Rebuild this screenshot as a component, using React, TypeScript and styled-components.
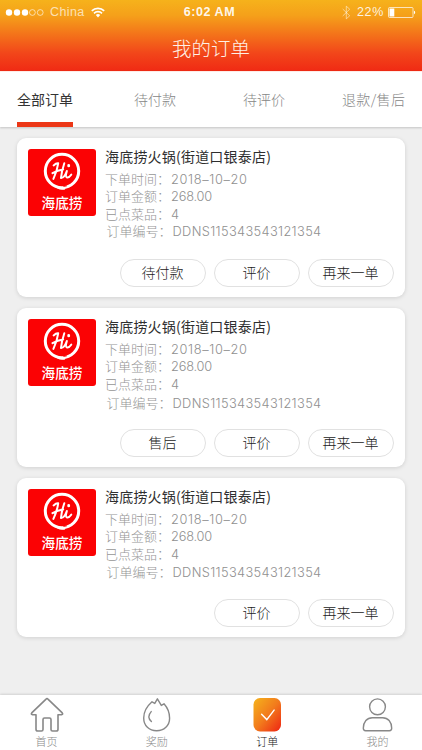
import React from "react";
import styled, { createGlobalStyle } from "styled-components";

const GlobalStyle = createGlobalStyle`
  * { box-sizing: border-box; }
  body {
    margin: 0;
    background: #efefef;
    font-family: "Noto Sans CJK SC", sans-serif;
    font-weight: 300;
  }
`;

const Screen = styled.div`
  width: 422px;
  height: 750px;
  display: flex;
  flex-direction: column;
  overflow: hidden;
  background: #efefef;
`;

const Header = styled.header`
  height: 71px;
  flex: none;
  background: linear-gradient(#f6b21b 0%, #f5a01a 22%, #f2461a 75%, #f02a14 100%);
  color: #fff;
`;

const StatusBar = styled.div`
  height: 24px;
  display: grid;
  grid-template-columns: 1fr auto 1fr;
  align-items: center;
  padding: 0 6px 0 5px;
  font-family: "Liberation Sans", sans-serif;
  font-weight: 400;
`;

const StatusGroup = styled.div<{ $end?: boolean }>`
  display: flex;
  align-items: center;
  justify-content: ${(p) => (p.$end ? "flex-end" : "flex-start")};
`;

const Carrier = styled.span`
  margin: 0 6px 0 5px;
  font-size: 12.5px;
  line-height: 24px;
  letter-spacing: 0.4px;
  color: rgba(255, 255, 255, 0.68);
`;

const Clock = styled.span`
  margin-right: 2px;
  font-size: 12.5px;
  font-weight: 700;
  line-height: 24px;
  letter-spacing: 0.55px;
  color: rgba(255, 255, 255, 0.93);
`;

const Percent = styled.span`
  margin: 0 4px 0 6px;
  font-size: 12.5px;
  letter-spacing: 0.7px;
  line-height: 24px;
  color: rgba(255, 255, 255, 0.88);
`;

const Title = styled.h1`
  margin: 0;
  height: 47px;
  font-size: 19.5px;
  line-height: 47px;
  font-weight: 300;
  text-align: center;
  color: #fff1e6;
`;

const Tabs = styled.nav`
  height: 56px;
  flex: none;
  display: flex;
  padding: 1px 0 0 17px;
  background: #fff;
  border-top: 1px solid #ffece7;
  box-shadow: 0 1px 2px rgba(0, 0, 0, 0.18);
`;

const Tab = styled.div<{ $active?: boolean; $gap: number }>`
  margin-right: ${(p) => p.$gap}px;
  height: 54px;
  font-size: 14px;
  line-height: 52px;
  white-space: nowrap;
  font-weight: ${(p) => (p.$active ? 400 : 300)};
  color: ${(p) => (p.$active ? "#333" : "#868686")};
  border-bottom: 5px solid ${(p) => (p.$active ? "#ec3717" : "transparent")};
  &:last-child { letter-spacing: 0.35px; }
`;

const Orders = styled.main`
  flex: 1;
  min-height: 0;
  display: flex;
  flex-direction: column;
  gap: 11px;
  padding: 11px 17px 0;
`;

const Card = styled.article`
  height: 159px;
  flex: none;
  display: flex;
  flex-direction: column;
  justify-content: space-between;
  padding: 11px 11px 10px;
  border-radius: 9px;
  background: #fff;
  box-shadow: 0 1px 4px rgba(0, 0, 0, 0.13);
`;

const Summary = styled.div`
  display: flex;
`;

const Logo = styled.div`
  width: 68px;
  height: 67px;
  flex: none;
  display: flex;
  flex-direction: column;
  align-items: center;
  border-radius: 3px;
  background: #fb0204;
`;

const LogoText = styled.span`
  margin-top: -1px;
  font-size: 13.6px;
  line-height: 20px;
  font-weight: 500;
  color: #fff;
`;

const Details = styled.div`
  margin-left: 9px;
  margin-top: -3px;
`;

const Shop = styled.h2`
  margin: 0 0 3px;
  height: 21px;
  font-size: 14px;
  line-height: 21px;
  font-weight: 400;
  letter-spacing: 0.2px;
  color: #2e2e2e;
`;

const Field = styled.div`
  height: 17.4px;
  display: flex;
  font-size: 13px;
  line-height: 17px;
  color: #969696;
`;

const OrderNumber = styled(Field)<{ $drop: number }>`
  margin-left: 1.5px;
  padding-top: ${(p) => p.$drop}px;
`;

const Label = styled.span`
  width: 66px;
`;

const Value = styled.span<{ $spacing: number }>`
  font-family: Inter, sans-serif;
  font-size: 12.8px;
  line-height: 19px;
  letter-spacing: ${(p) => p.$spacing}px;
  color: #909090;
`;

const Actions = styled.div`
  display: flex;
  justify-content: flex-end;
  gap: 8px;
`;

const Action = styled.button`
  width: 86px;
  height: 28px;
  padding: 0 1px 1px 0;
  border: 1px solid #e1e1e1;
  border-radius: 14px;
  background: #fff;
  font: 300 14px/25px "Noto Sans CJK SC", sans-serif;
  color: #222;
`;

const BottomBar = styled.footer`
  height: 55px;
  flex: none;
  display: flex;
  justify-content: space-between;
  padding: 2px 26px 0 28px;
  background: #fff;
  box-shadow: 0 -1px 2px rgba(0, 0, 0, 0.12);
`;

const NavItem = styled.div<{ $active?: boolean }>`
  width: 37px;
  display: flex;
  flex-direction: column;
  align-items: center;
  font-size: 11px;
  line-height: 16px;
  color: ${(p) => (p.$active ? "#222" : "#8a8a8a")};
  svg { display: block; }
`;

const Signal = () => (
  <svg width="40" height="9" viewBox="0 0 40 9">
    {[4, 12, 20].map((x) => (
      <circle key={x} cx={x} cy="4.5" r="3.2" fill="#fff" />
    ))}
    {[27.4, 35.2].map((x) => (
      <circle key={x} cx={x} cy="4.5" r="2.9" fill="none" stroke="#fff" strokeOpacity=".75" strokeWidth=".8" />
    ))}
  </svg>
);

const Wifi = () => (
  <svg width="14" height="11" viewBox="0 0 14 11" fill="none" stroke="#fff" strokeWidth="1.7">
    <path d="M.8 3.9a8.8 8.8 0 0 1 12.4 0M3 6.3a5.7 5.7 0 0 1 8 0" />
    <path d="M4.8 8.1a3.2 3.2 0 0 1 4.4 0L7 10.4z" fill="#fff" stroke="none" />
  </svg>
);

const Bluetooth = () => (
  <svg width="9" height="15" viewBox="0 0 9 15" fill="none" stroke="#fff" strokeOpacity=".5" strokeWidth="1">
    <path d="M.7 4l7 6.8-3.4 3V1.2l3.4 3-7 6.8" />
  </svg>
);

const Battery = () => (
  <svg width="28" height="11" viewBox="0 0 28 11">
    <rect x=".5" y=".5" width="24.5" height="10" rx="1" fill="none" stroke="#fff" strokeOpacity=".7" />
    <rect x="1.5" y="1.5" width="4.8" height="8" fill="#fff" />
    <path d="M26 3.8c1.6.3 1.6 3.1 0 3.4z" fill="#fff" />
  </svg>
);

const HiMark = () => (
  <svg width="42" height="44" viewBox="0 0 42 44" fill="none" stroke="#fff" strokeLinecap="round" strokeLinejoin="round">
    <circle cx="21" cy="22" r="16.7" strokeWidth="3" />
    <path d="M16.5 38.4c2 1.2 4.2 1.6 6.8 1.3" strokeWidth="2" />
    <path d="M22.8 37.3l2.6-.4" stroke="#fb0204" strokeWidth="1" />
    <path d="M12.6 16.4c1.7-1.6 3.2-2.3 4.6-2.1-.7 5-2.6 10.8-4.8 15.6M23.3 14.2c-1.6 4.8-2.8 9.6-3.3 14.6M11.5 24.2c3.7-2.2 7.4-3.4 10.7-3.8" strokeWidth="2" />
    <path d="M20 28.8c2.4.4 4.6-3.2 5.9-6.9-.9 3.3-1.5 6-.2 6.5 1.5.5 3.3-1 4.6-2.8" strokeWidth="1.9" />
    <path d="M27.7 16.5v.4" strokeWidth="2.8" />
  </svg>
);

const HomeIcon = () => (
  <svg width="36" height="36" viewBox="0 0 36 36" fill="none" stroke="#888" strokeWidth="1.6" strokeLinejoin="round">
    <path d="M16.8 2.3Q18 1 19.2 2.3L33 15.6q1.6 1.7-.6 2.2H29v14.4q0 1.8-1.8 1.8h-3.7q-1.5 0-1.5-1.5v-10q0-1.5-1.5-1.5h-5q-1.5 0-1.5 1.5v10q0 1.5-1.5 1.5H8.8Q7 34 7 32.2V17.8H3.6q-2.2-.5-.6-2.2z" />
  </svg>
);

const RewardIcon = () => (
  <svg width="36" height="36" viewBox="0 0 36 36" fill="none" stroke="#888" strokeWidth="1.4" strokeLinejoin="round">
    <path d="M13 4.8C8 9.2 4.7 15 4.7 21c0 7.8 5.5 12.8 12.9 12.8S30.6 28.6 30.6 21.2c0-5.8-2.2-10.6-5.6-14.4l-2.7 1.6-3.9-6.6-2.6 4.6z" />
    <path d="M12.2 14.6c-2.9 3.2-2.9 7 .2 10" strokeLinecap="round" />
  </svg>
);

const OrderIcon = () => (
  <svg width="36" height="36" viewBox="0 0 36 36">
    <defs>
      <linearGradient id="orderFill" x1="0" y1="0" x2="1" y2="1">
        <stop offset="0" stopColor="#f5b41c" />
        <stop offset=".5" stopColor="#f27b1c" />
        <stop offset="1" stopColor="#ee2414" />
      </linearGradient>
    </defs>
    <rect x="4.5" y="1" width="27.5" height="33.5" rx="6.5" fill="url(#orderFill)" />
    <path d="M12.6 17.3l5.2 5.3 7.3-9.5" fill="none" stroke="#fff" strokeWidth="1.4" strokeLinecap="round" />
  </svg>
);

const ProfileIcon = () => (
  <svg width="36" height="36" viewBox="0 0 36 36" fill="none" stroke="#888" strokeWidth="1.4">
    <circle cx="18.5" cy="9.8" r="7.9" />
    <path d="M4.3 31.3c0-6.5 3.8-10.6 9-10.6h10.4c5.2 0 9 4.1 9 10.6 0 1.6-.7 2.4-2.3 2.4H6.6C5 33.7 4.3 32.9 4.3 31.3z" />
  </svg>
);

const tabs = [
  { label: "全部订单", gap: 61, active: true },
  { label: "待付款", gap: 67 },
  { label: "待评价", gap: 57 },
  { label: "退款/售后", gap: 0 },
];

const orders = [
  { actions: ["待付款", "评价", "再来一单"], drop: 0 },
  { actions: ["售后", "评价", "再来一单"], drop: 2 },
  { actions: ["评价", "再来一单"], drop: 1 },
];

const fields = [
  { label: "下单时间：", value: "2018–10–20", spacing: 0.65 },
  { label: "订单金额：", value: "268.00", spacing: -0.2 },
  { label: "已点菜品：", value: "4", spacing: 0 },
];

const navItems = [
  { label: "首页", Icon: HomeIcon },
  { label: "奖励", Icon: RewardIcon },
  { label: "订单", Icon: OrderIcon, active: true },
  { label: "我的", Icon: ProfileIcon },
];

export default function App() {
  return (
    <Screen>
      <GlobalStyle />
      <Header>
        <StatusBar>
          <StatusGroup>
            <Signal />
            <Carrier>China</Carrier>
            <Wifi />
          </StatusGroup>
          <Clock>6:02 AM</Clock>
          <StatusGroup $end>
            <Bluetooth />
            <Percent>22%</Percent>
            <Battery />
          </StatusGroup>
        </StatusBar>
        <Title>我的订单</Title>
      </Header>
      <Tabs>
        {tabs.map((t) => (
          <Tab key={t.label} $active={t.active} $gap={t.gap}>{t.label}</Tab>
        ))}
      </Tabs>
      <Orders>
        {orders.map(({ actions, drop }, i) => (
          <Card key={i}>
            <Summary>
              <Logo>
                <HiMark />
                <LogoText>海底捞</LogoText>
              </Logo>
              <Details>
                <Shop>海底捞火锅(街道口银泰店)</Shop>
                {fields.map((f) => (
                  <Field key={f.label}>
                    <Label>{f.label}</Label>
                    <Value $spacing={f.spacing}>{f.value}</Value>
                  </Field>
                ))}
                <OrderNumber $drop={drop}>
                  <Label>订单编号：</Label>
                  <Value $spacing={0.36}>DDNS115343543121354</Value>
                </OrderNumber>
              </Details>
            </Summary>
            <Actions>
              {actions.map((a) => (
                <Action key={a}>{a}</Action>
              ))}
            </Actions>
          </Card>
        ))}
      </Orders>
      <BottomBar>
        {navItems.map(({ label, Icon, active }) => (
          <NavItem key={label} $active={active}>
            <Icon />
            {label}
          </NavItem>
        ))}
      </BottomBar>
    </Screen>
  );
}
